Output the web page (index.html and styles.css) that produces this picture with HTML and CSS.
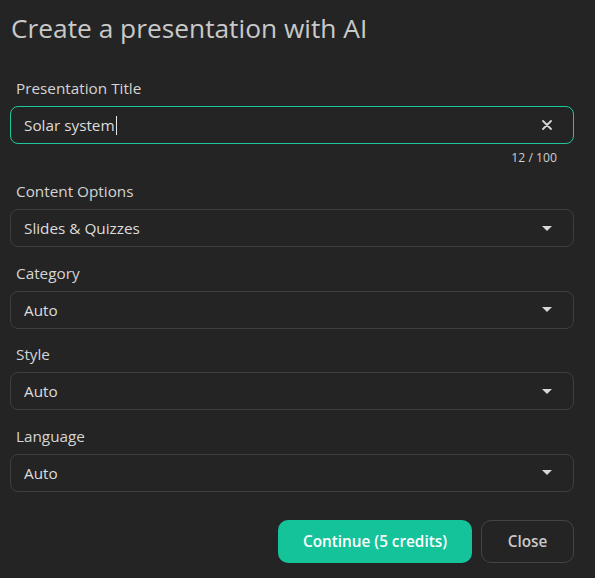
FILE: index.html
```html
<!DOCTYPE html>
<html lang="en">
<head>
<meta charset="utf-8">
<title>Create a presentation with AI</title>
<link rel="stylesheet" href="styles.css">
</head>
<body>
<div class="dialog">
  <h1 class="title">Create a presentation with AI</h1>

  <div class="field">
    <label class="label">Presentation Title</label>
    <div class="box box-active">
      <span class="value">Solar system</span><span class="caret"></span>
      <svg class="clear" width="10" height="10" viewBox="0 0 10 10"><path d="M1 1L9 9M9 1L1 9" stroke="#d4d4d4" stroke-width="1.8" stroke-linecap="round"/></svg>
    </div>
    <div class="count">12 / 100</div>
  </div>

  <div class="field">
    <label class="label">Content Options</label>
    <div class="box"><span class="value">Slides &amp; Quizzes</span><span class="arrow"></span></div>
  </div>

  <div class="field">
    <label class="label">Category</label>
    <div class="box"><span class="value">Auto</span><span class="arrow"></span></div>
  </div>

  <div class="field">
    <label class="label">Style</label>
    <div class="box"><span class="value">Auto</span><span class="arrow"></span></div>
  </div>

  <div class="field">
    <label class="label">Language</label>
    <div class="box"><span class="value">Auto</span><span class="arrow"></span></div>
  </div>

  <div class="actions">
    <button class="btn btn-primary">Continue (5 credits)</button>
    <button class="btn btn-secondary">Close</button>
  </div>
</div>
</body>
</html>
```

FILE: styles.css
```css
html, body {
  margin: 0;
  padding: 0;
  background: #242424;
}
body {
  font-family: "Open Sans", "Noto Sans", sans-serif;
  color: #d2d2d2;
  width: 595px;
  height: 578px;
  overflow: hidden;
}
.dialog {
  padding: 10px 21px 0 10px;
  display: flex;
  flex-direction: column;
}
.title {
  margin: 0 0 0 1px;
  font-size: 26.3px;
  line-height: 36px;
  font-weight: 400;
  color: #c9c9c9;
}
.field {
  display: flex;
  flex-direction: column;
  margin-top: 16.4px;
}
.field:first-of-type {
  margin-top: 33px;
}
.label {
  font-size: 15.3px;
  line-height: 19px;
  padding-left: 6px;
  margin-bottom: 8px;
  color: #d4d4d4;
}
.box {
  height: 38px;
  box-sizing: border-box;
  border: 1px solid #3e3e3e;
  border-radius: 8px;
  display: flex;
  align-items: center;
  padding: 0 20px 0 13px;
  font-size: 15.3px;
  color: #dcdcdc;
}
.box-active {
  border-color: #1fc79b;
}
.value {
  white-space: nowrap;
}
.caret {
  display: inline-block;
  width: 1px;
  height: 19px;
  background: #e8e8e8;
  margin-left: 1px;
}
.clear {
  margin-left: auto;
  margin-right: 1px;
}
.arrow {
  margin-left: auto;
  margin-right: 1px;
  width: 0;
  height: 0;
  border-left: 5px solid transparent;
  border-right: 5px solid transparent;
  border-top: 5px solid #d8d8d8;
}
.count {
  align-self: flex-end;
  margin-top: 6px;
  margin-right: 17px;
  font-size: 12.2px;
  line-height: 16px;
  color: #cfcfcf;
}
.actions {
  display: flex;
  justify-content: flex-end;
  gap: 9px;
  margin-top: 28px;
}
.btn {
  height: 43px;
  border-radius: 10px;
  font-family: "Open Sans", "Noto Sans", sans-serif;
  font-size: 15.3px;
  font-weight: 600;
  cursor: pointer;
}
.btn-primary {
  width: 194px;
  background: #14c39a;
  border: none;
  color: #ffffff;
}
.btn-secondary {
  width: 93px;
  background: transparent;
  border: 1px solid #444444;
  color: #c9c9c9;
}
```
